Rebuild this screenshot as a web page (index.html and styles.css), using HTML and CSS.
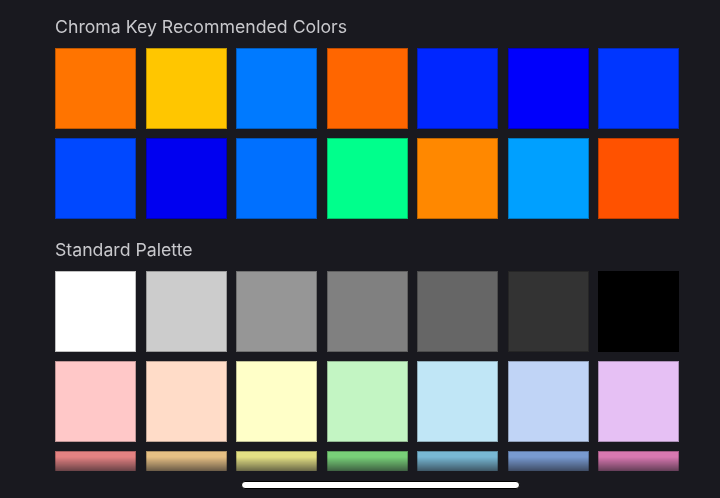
FILE: index.html
```html
<!DOCTYPE html>
<html lang="en">
<head>
  <meta charset="UTF-8" />
  <meta name="viewport" content="width=device-width, initial-scale=1.0"/>
  <title>Colors</title>
  <link rel="stylesheet" href="styles.css">
</head>
<body>
  <div class="screen">
    <div class="scroll">
      <h2 class="section-title">Chroma Key Recommended Colors</h2>
      <div class="swatches">
        <div class="swatch c-orange"></div>
        <div class="swatch c-yellow"></div>
        <div class="swatch c-blue"></div>
        <div class="swatch c-orange2"></div>
        <div class="swatch c-blue2"></div>
        <div class="swatch c-blue3"></div>
        <div class="swatch c-blue4"></div>
        <div class="swatch c-blue5"></div>
        <div class="swatch c-blue6"></div>
        <div class="swatch c-blue7"></div>
        <div class="swatch c-green"></div>
        <div class="swatch c-orange3"></div>
        <div class="swatch c-sky"></div>
        <div class="swatch c-red"></div>
      </div>

      <h2 class="section-title second">Standard Palette</h2>
      <div class="swatches">
        <div class="swatch g-1"></div>
        <div class="swatch g-2"></div>
        <div class="swatch g-3"></div>
        <div class="swatch g-4"></div>
        <div class="swatch g-5"></div>
        <div class="swatch g-6"></div>
        <div class="swatch g-7"></div>
        <div class="swatch p-1"></div>
        <div class="swatch p-2"></div>
        <div class="swatch p-3"></div>
        <div class="swatch p-4"></div>
        <div class="swatch p-5"></div>
        <div class="swatch p-6"></div>
        <div class="swatch p-7"></div>
        <div class="swatch m-1"></div>
        <div class="swatch m-2"></div>
        <div class="swatch m-3"></div>
        <div class="swatch m-4"></div>
        <div class="swatch m-5"></div>
        <div class="swatch m-6"></div>
        <div class="swatch m-7"></div>
      </div>
    </div>
    <div class="home-area">
      <div class="home-bar"></div>
    </div>
  </div>
</body>
</html>
```

FILE: styles.css
```css
body {
  margin: 0;
  background: #19191f;
  font-family: Inter, "Noto Sans", sans-serif;
}

.screen {
  width: 720px;
  height: 498px;
  display: flex;
  flex-direction: column;
  overflow: hidden;
}

.scroll {
  height: 471px;
  overflow: hidden;
  padding: 0 0 0 55px;
  box-sizing: border-box;
  -webkit-mask-image: linear-gradient(to bottom, #000 457px, rgba(0,0,0,0.4) 471px);
  mask-image: linear-gradient(to bottom, #000 457px, rgba(0,0,0,0.4) 471px);
}

.section-title {
  margin: 0;
  padding-top: 17px;
  font-size: 17.7px;
  line-height: 20px;
  font-weight: 400;
  color: #c8c8cc;
}

.section-title.second {
  padding-top: 21px;
}

.swatches {
  display: grid;
  grid-template-columns: repeat(7, 81px);
  column-gap: 9.5px;
  row-gap: 9px;
  margin-top: 11px;
}

.swatch {
  height: 81px;
  box-shadow: inset 0 0 0 1px rgba(0, 0, 0, 0.25);
}

.home-area {
  flex: 1;
  padding-top: 10px;
}

.home-bar {
  margin-left: 241px;
  width: 277px;
  height: 6px;
  background: #fff;
  border: 1px solid #000;
  border-radius: 4px;
}

/* chroma key */
.c-orange { background: #ff7400; }
.c-yellow { background: #ffc600; }
.c-blue { background: #007aff; }
.c-orange2 { background: #ff6600; }
.c-blue2 { background: #0026ff; }
.c-blue3 { background: #0000fc; }
.c-blue4 { background: #0036ff; }
.c-blue5 { background: #0048ff; }
.c-blue6 { background: #0000f0; }
.c-blue7 { background: #0070ff; }
.c-green { background: #00ff8c; }
.c-orange3 { background: #ff8800; }
.c-sky { background: #00a0ff; }
.c-red { background: #ff5200; }

/* standard palette */
.g-1 { background: #ffffff; }
.g-2 { background: #cccccc; }
.g-3 { background: #969696; }
.g-4 { background: #808080; }
.g-5 { background: #666666; }
.g-6 { background: #333333; }
.g-7 { background: #000000; }
.p-1 { background: #ffc8c8; }
.p-2 { background: #ffdcc8; }
.p-3 { background: #ffffc8; }
.p-4 { background: #c3f5c3; }
.p-5 { background: #c0e6f6; }
.p-6 { background: #c0d4f6; }
.p-7 { background: #e6c0f4; }
.m-1 { background: #e48282; }
.m-2 { background: #e6c084; }
.m-3 { background: #e4e084; }
.m-4 { background: #78d078; }
.m-5 { background: #78b8d4; }
.m-6 { background: #789ad0; }
.m-7 { background: #d878b0; }
```
